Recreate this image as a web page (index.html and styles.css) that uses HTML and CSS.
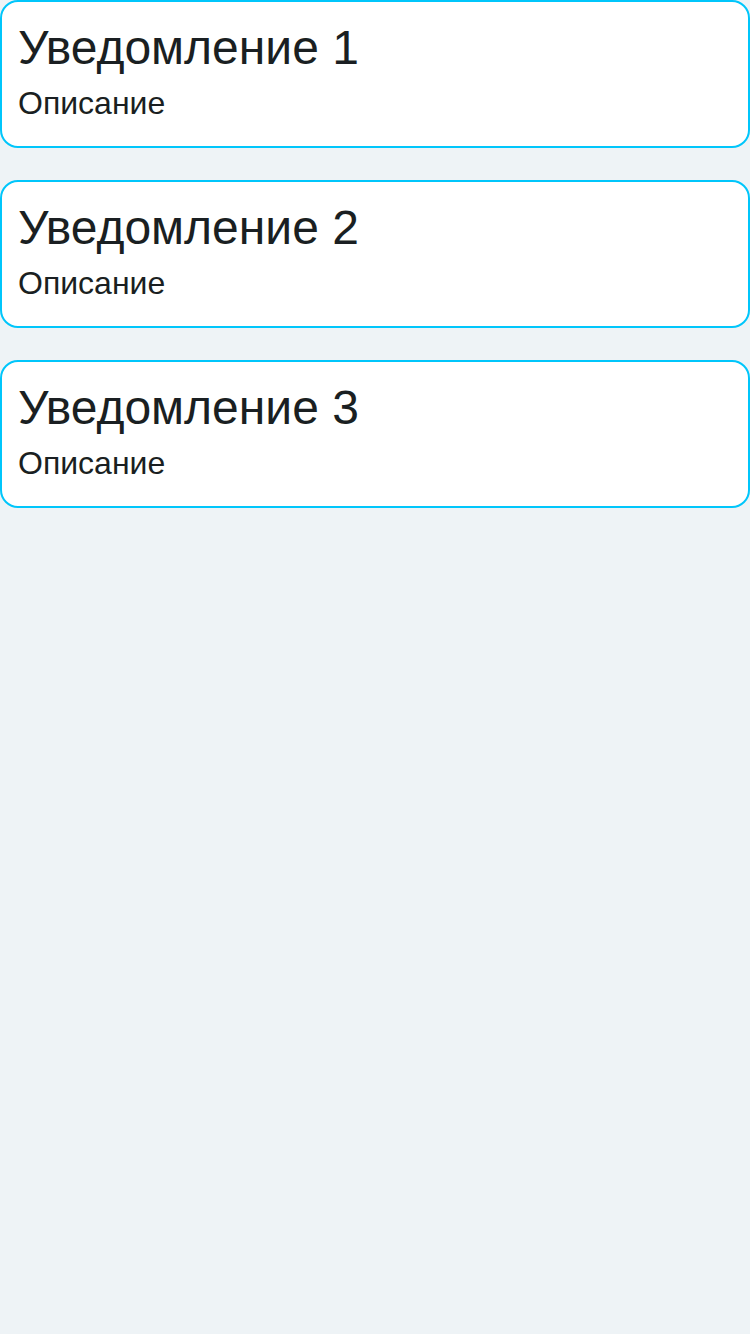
FILE: index.html
```html
<!DOCTYPE html>
<html lang="ru">
<head>
<meta charset="utf-8">
<link rel="stylesheet" href="styles.css">
</head>
<body>
<div class="list">
  <div class="card">
    <div class="title">Уведомление 1</div>
    <div class="desc">Описание</div>
  </div>
  <div class="card">
    <div class="title">Уведомление 2</div>
    <div class="desc">Описание</div>
  </div>
  <div class="card">
    <div class="title">Уведомление 3</div>
    <div class="desc">Описание</div>
  </div>
</div>
</body>
</html>
```
FILE: styles.css
```css
html, body {
  margin: 0;
  padding: 0;
  background: #eef3f6;
  font-family: "Liberation Sans", Arial, sans-serif;
  color: #1a1f22;
  height: 100%;
}
.list {
  display: flex;
  flex-direction: column;
  gap: 32px;
}
.card {
  background: #fff;
  border: 2px solid #00c6fb;
  border-radius: 18px;
  height: 148px;
  box-sizing: border-box;
  padding: 16px 16px;
}
.title {
  font-size: 48px;
  line-height: 60px;
}
.desc {
  font-size: 32px;
  line-height: 50px;
}
```
